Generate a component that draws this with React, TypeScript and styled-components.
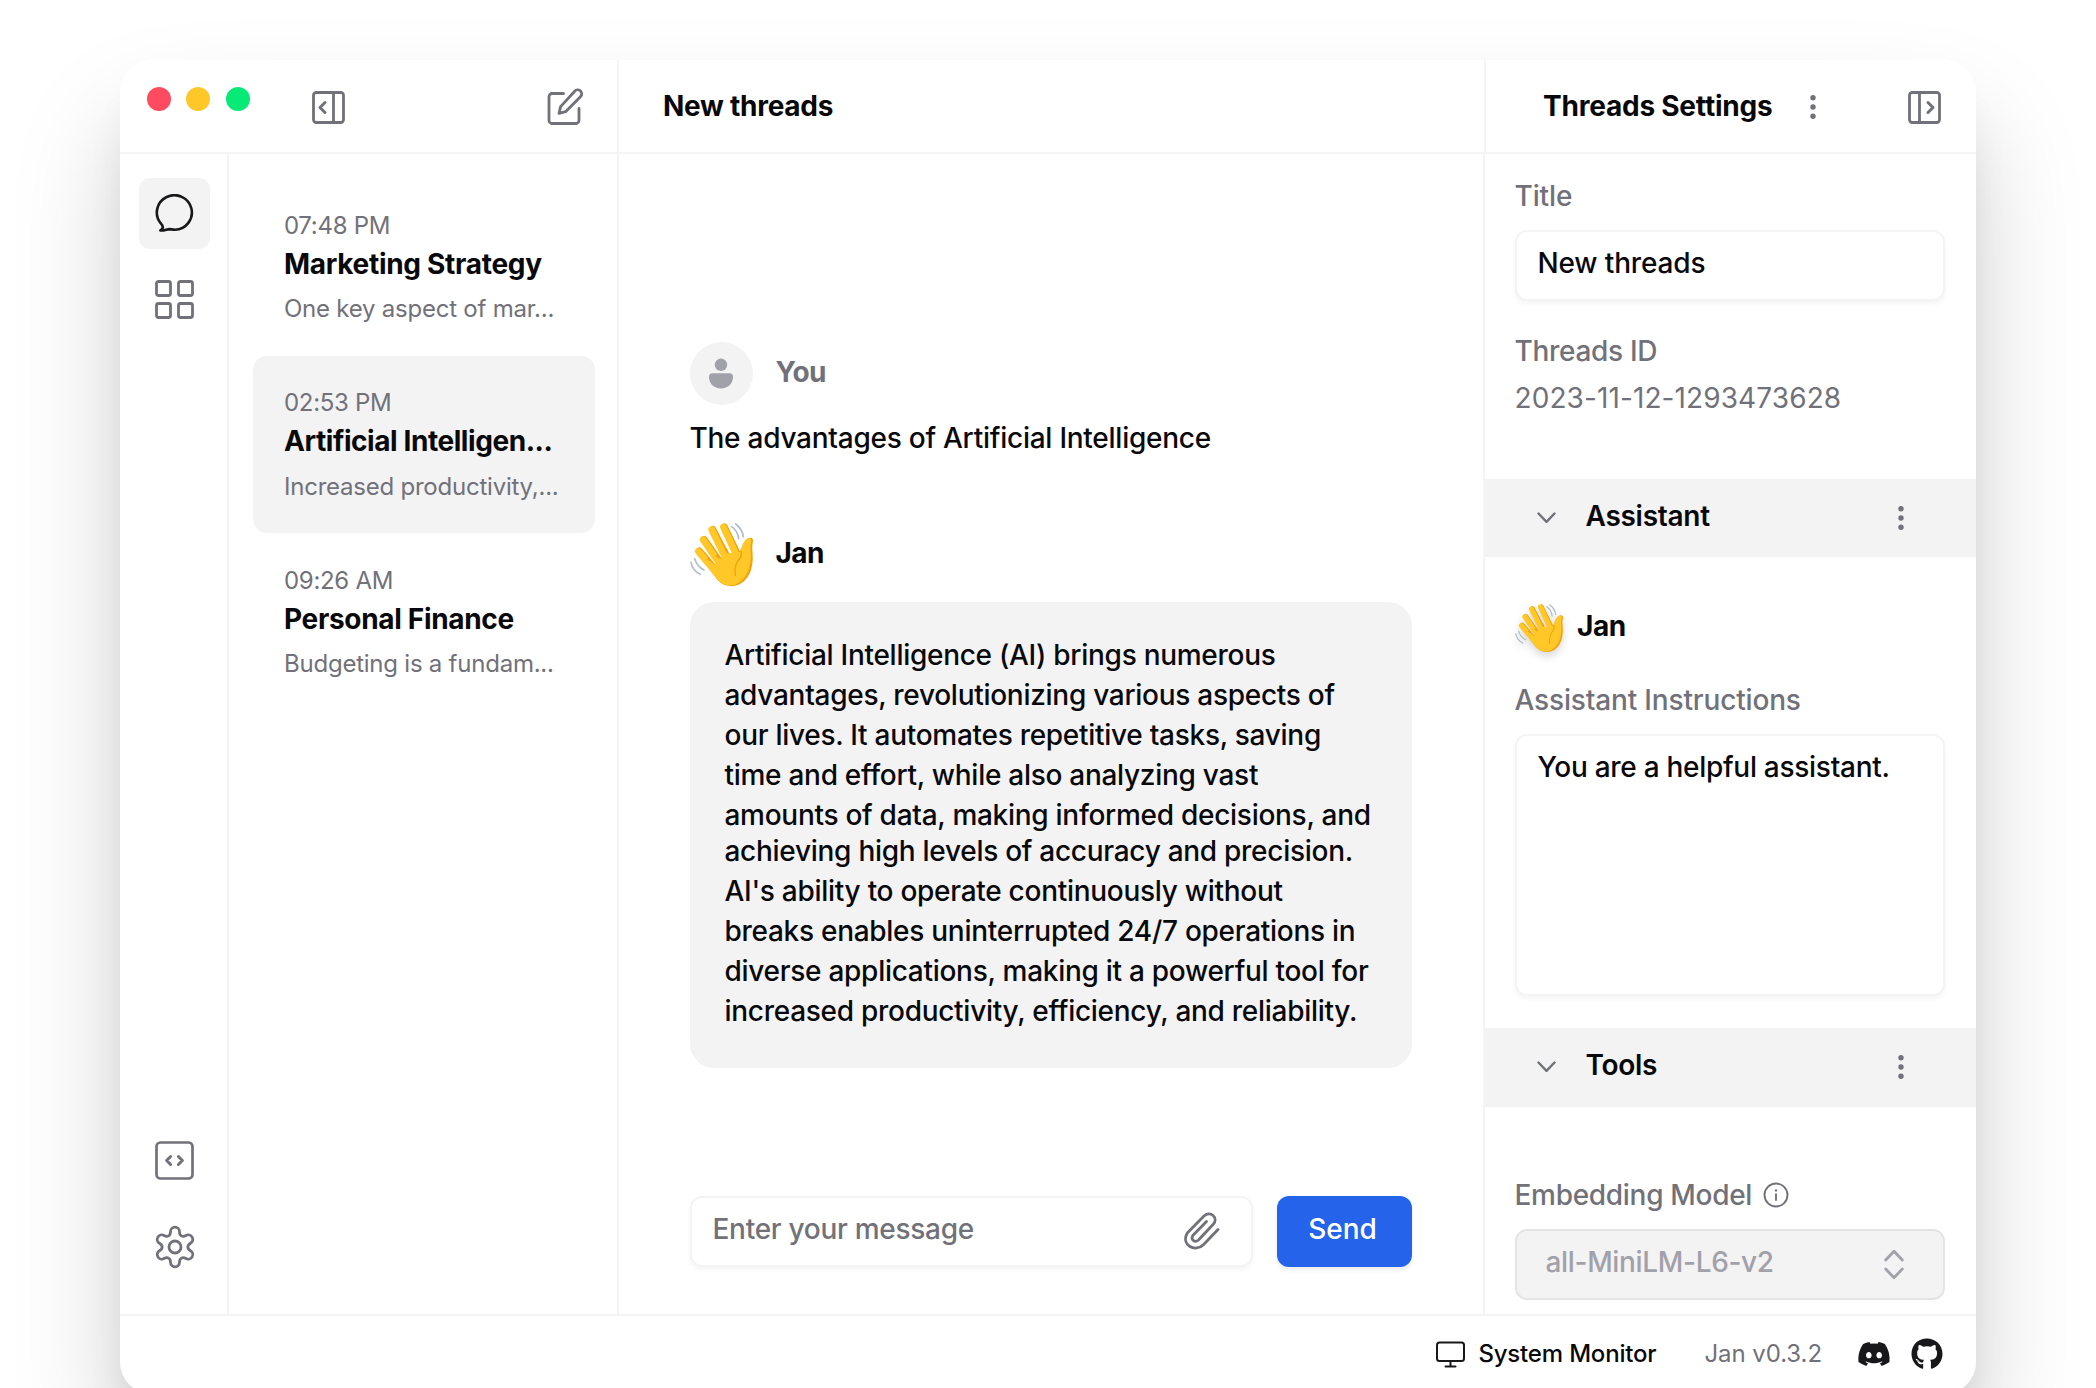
import React from "react";
import styled, { createGlobalStyle } from "styled-components";
import { FaDiscord, FaGithub } from "react-icons/fa";

const color = {
  ink: "#09090b",
  icon: "#18181b",
  muted: "#71717a",
  faint: "#a1a1aa",
  line: "#f4f4f5",
  panel: "#f3f3f3",
  border: "#e4e4e7",
  blue: "#2563eb",
};

const GlobalStyle = createGlobalStyle`
  *, *::before, *::after { box-sizing: border-box; }
  html, body { margin: 0; background: #fff; overflow: hidden; }
  body { font-family: Inter, "Liberation Sans", sans-serif; color: ${color.ink}; }
  svg { display: block; flex: none; }
`;

/* ---------- frame ---------- */

const Page = styled.div`
  height: 1388px;
  padding: 60px 120px 0;
  overflow: hidden;
`;

const Window = styled.div`
  display: flex;
  flex-direction: column;
  height: 1334px;
  background: #fff;
  border-radius: 32px;
  box-shadow: 0 66px 110px rgba(0, 0, 0, 0.18), 0 44px 44px -8px rgba(0, 0, 0, 0.08);
`;

const Header = styled.header`
  display: flex;
  height: 94px;
  border-bottom: 2px solid ${color.line};
`;

const HeaderLeft = styled.div`
  display: flex;
  width: 499px;
  padding: 26px 33px 0 27px;
  border-right: 2px solid ${color.line};
`;

const Lights = styled.div`
  display: flex;
  gap: 15.3px;
  padding-top: 1px;
  margin-right: 62px;
`;

const Light = styled.span<{ $tone: string }>`
  width: 24px;
  height: 24px;
  border-radius: 50%;
  background: ${(p) => p.$tone};
`;

const HeaderIcon = styled.span<{ $push?: boolean; $left?: number; $top: number }>`
  margin-left: ${(p) => (p.$push ? "auto" : `${p.$left ?? 0}px`)};
  padding-top: ${(p) => p.$top}px;
`;

const HeaderMiddle = styled.div`
  width: 865px;
  padding: 26px 44px 0;
`;

const HeaderRight = styled.div`
  display: flex;
  flex: 1;
  padding: 26px 35px 0 57px;
  border-left: 2px solid ${color.line};
`;

const Body = styled.main`
  display: flex;
  height: 1160px;
`;

const Footer = styled.footer`
  display: flex;
  align-items: flex-start;
  justify-content: flex-end;
  flex: 1;
  padding: 19.5px 33px 0 0;
  border-top: 2px solid ${color.line};
`;

/* ---------- text ---------- */

const Text = styled.div<{ $weight?: number; $tone?: string; $track?: number; $small?: boolean }>`
  font-size: ${(p) => (p.$small ? 24 : 28)}px;
  line-height: ${(p) => (p.$small ? 36 : 40)}px;
  font-weight: ${(p) => p.$weight ?? 400};
  letter-spacing: ${(p) => p.$track ?? 0}px;
  color: ${(p) => p.$tone ?? color.ink};
  white-space: nowrap;
`;

/* ---------- navigation ---------- */

const Nav = styled.nav`
  display: flex;
  flex-direction: column;
  gap: 15px;
  width: 109px;
  padding: 24px 17px 32px 19px;
  border-right: 2px solid ${color.line};
`;

const NavItem = styled.div<{ $active?: boolean; $bottom?: boolean }>`
  display: flex;
  align-items: center;
  justify-content: center;
  width: 71px;
  height: 71px;
  margin-top: ${(p) => (p.$bottom ? "auto" : "0")};
  border-radius: 11px;
  background: ${(p) => (p.$active ? color.panel : "transparent")};
`;

/* ---------- threads ---------- */

const Threads = styled.section`
  display: flex;
  flex-direction: column;
  gap: 1px;
  width: 390px;
  padding: 24.5px 22px 0 24px;
  border-right: 2px solid ${color.line};
`;

const ThreadCard = styled.article<{ $active?: boolean }>`
  height: 176.5px;
  padding: 29px 0 0 31px;
  border-radius: 14px;
  background: ${(p) => (p.$active ? color.panel : "transparent")};
`;

const ThreadSummary = styled(Text)`
  padding-top: 7.5px;
`;

/* ---------- conversation ---------- */

const Chat = styled.section`
  display: flex;
  flex-direction: column;
  width: 864px;
  padding: 188px 71px 47px 70.5px;
`;

const Author = styled.div<{ $top?: number }>`
  display: flex;
  align-items: center;
  gap: 23px;
  height: 63px;
  margin-top: ${(p) => p.$top ?? 0}px;
`;

const AuthorName = styled(Text)`
  padding-bottom: 4px;
`;

const Avatar = styled.div`
  display: flex;
  align-items: center;
  justify-content: center;
  width: 63px;
  height: 63px;
  border-radius: 50%;
  background: ${color.panel};
`;

const Message = styled(Text)`
  margin-top: 13px;
`;

const Bubble = styled.div`
  height: 466px;
  margin-top: 16px;
  padding: 33px 0 0 35px;
  border-radius: 24px;
  background: ${color.panel};
`;

const Paragraph = styled(Text)`
  & + & { margin-top: -4px; }
`;

const Composer = styled.div`
  display: flex;
  gap: 24px;
  margin-top: auto;
`;

const Field = styled.div<{ $height?: number }>`
  display: flex;
  align-items: flex-start;
  justify-content: space-between;
  height: ${(p) => p.$height ?? 71}px;
  padding: 11px 31px 0 21px;
  border: 2px solid ${color.line};
  border-radius: 12px;
  background: #fff;
  box-shadow: 0 3px 5px rgba(0, 0, 0, 0.045);
`;

const MessageField = styled(Field)`
  flex: 1;
`;

const ClipSlot = styled.div`
  padding-top: 3px;
`;

const SendButton = styled.button`
  width: 135px;
  height: 71px;
  padding: 0 4px 5px 0;
  border: 0;
  border-radius: 12px;
  background: ${color.blue};
  color: #fff;
  font: 500 28px/40px Inter, "Liberation Sans", sans-serif;
  box-shadow: 0 3px 5px rgba(0, 0, 0, 0.08);
`;

/* ---------- settings ---------- */

const Settings = styled.aside`
  flex: 1;
  border-left: 2px solid ${color.line};
`;

const Group = styled.div<{ $top: number; $height: number }>`
  height: ${(p) => p.$height}px;
  padding: ${(p) => p.$top}px 31.5px 0 29.5px;
`;

const Spaced = styled.div<{ $top: number }>`
  margin-top: ${(p) => p.$top}px;
`;

const SectionBar = styled.div`
  display: flex;
  align-items: center;
  height: 78.5px;
  padding: 0 72px 0 52px;
  background: ${color.panel};
`;

const SectionTitle = styled(Text)`
  flex: 1;
  padding: 0 0 4px 29.5px;
`;

const AssistantRow = styled.div`
  display: flex;
  align-items: center;
  gap: 14.5px;
  height: 48px;
`;

const HandShadow = styled.span`
  filter: drop-shadow(0 4px 4px rgba(0, 0, 0, 0.16));
`;

const LabelRow = styled.div`
  display: flex;
  align-items: center;
  gap: 11px;
`;

const Select = styled.div`
  display: flex;
  align-items: center;
  justify-content: space-between;
  height: 71px;
  padding: 0 38.5px 0 29px;
  border: 2px solid ${color.border};
  border-radius: 12px;
  background: ${color.panel};
`;

const SelectValue = styled(Text)`
  padding-bottom: 4px;
`;

const FooterItem = styled.div<{ $left?: number; $top?: number }>`
  display: flex;
  gap: 13px;
  margin-left: ${(p) => p.$left ?? 0}px;
  padding-top: ${(p) => p.$top ?? 0}px;
`;

/* ---------- icons ---------- */

const line = (stroke: string, width: number) => ({
  fill: "none",
  stroke,
  strokeWidth: width,
  strokeLinecap: "round" as const,
  strokeLinejoin: "round" as const,
});

const PanelIcon = ({ flip }: { flip?: boolean }) => (
  <svg width="33" height="33" viewBox="0 0 33 33" {...line(color.muted, 2.8)} transform={flip ? "scale(-1 1)" : undefined}>
    <rect x="1.5" y="1.5" width="30" height="30" rx="2.8" />
    <path d="M21.5 1.5v30" />
    <path d="M13 11.5L8 16.5L13 21.5" strokeWidth="3" />
  </svg>
);

const EditIcon = () => (
  <svg width="37" height="37" viewBox="0 0 37 37" {...line(color.muted, 2.8)}>
    <path d="M16.5 5.5H5A3 3 0 0 0 2 8.500V32.500A3 3 0 0 0 5 35.500H29A3 3 0 0 0 32 32.500V20.500" />
    <path d="M27.700 3.200A3.700 3.700 0 0 1 33.700 8.400L18.600 23.700L12 25.300L13.600 18.600Z" />
  </svg>
);

const ChatIcon = () => (
  <svg width="39" height="39" viewBox="0 0 39 39" {...line(color.icon, 2.6)}>
    <path d="M5.600 29.200A17.500 17.300 0 1 1 20 35.800C17.500 35.800 16 35.100 14.300 35.100C11.500 35.400 9 37 5.300 36.500C8.600 34.800 8.600 32.400 5.600 29.200Z" />
  </svg>
);

const GridIcon = () => (
  <svg width="39" height="39" viewBox="0 0 39 39" {...line(color.muted, 2.8)}>
    {[1.5, 23.5].map((y) => [1.5, 23.5].map((x) => (
      <rect key={`${x}-${y}`} x={x} y={y} width="14" height="14" rx="2" />
    )))}
  </svg>
);

const CodeIcon = () => (
  <svg width="39" height="39" viewBox="0 0 39 39" {...line(color.muted, 2.7)}>
    <rect x="1.500" y="1.500" width="36" height="36" rx="4" />
    <path d="M15.600 15.500L11.600 19.500L15.600 23.500M23.400 15.500L27.400 19.500L23.400 23.500" strokeWidth="3" />
  </svg>
);

const gearOutline = (() => {
  const turn = (k: number, x: number, y: number) => {
    const a = (k * Math.PI) / 3;
    return `${(x * Math.cos(a) - y * Math.sin(a)).toFixed(2)} ${(x * Math.sin(a) + y * Math.cos(a)).toFixed(2)}`;
  };
  let d = `M${turn(0, -4.5, -15.3)}`;
  for (let k = 0; k < 6; k++) {
    d += `A4.500 4.500 0 0 1 ${turn(k, 4.5, -15.3)}`;
    d += `C${turn(k, 4.5, -11.2)} ${turn(k + 1, -4.5, -11.2)} ${turn(k + 1, -4.5, -15.3)}`;
  }
  return `${d}Z`;
})();

const GearIcon = () => (
  <svg width="44" height="44" viewBox="-22 -22 44 44" {...line(color.muted, 2.8)}>
    <path d={gearOutline} />
    <circle r="6" />
  </svg>
);

const PersonIcon = () => (
  <svg width="26" height="32" viewBox="0 0 26 32" fill={color.faint}>
    <circle cx="13" cy="6.800" r="6.200" />
    <path d="M4.500 15.300H21.500A3.500 3.500 0 0 1 25 18.800C25 25.800 20 30.500 13 30.500S1 25.800 1 18.800A3.500 3.500 0 0 1 4.500 15.300Z" />
  </svg>
);

const PaperclipIcon = () => (
  <svg width="36" height="38" viewBox="0 0 36 38" {...line(color.muted, 2.8)}>
    <path d="M34 17.500L19.700 32.500C11.500 41 -3.500 33 3.300 21L20 4C26.500 -1.800 34.500 6 29.500 12L14.500 28C10.500 31.500 6 27 9.300 23L22.500 9.500" />
  </svg>
);

const DotsIcon = () => (
  <svg width="6" height="24" viewBox="0 0 6 24" fill={color.muted}>
    <circle cx="3" cy="2.800" r="2.700" />
    <circle cx="3" cy="12" r="2.700" />
    <circle cx="3" cy="21.200" r="2.700" />
  </svg>
);

const ChevronIcon = () => (
  <svg width="19" height="12" viewBox="0 0 19 12" {...line(color.muted, 2.4)}>
    <path d="M1.500 1.500L9.500 9.800L17.500 1.500" />
  </svg>
);

const InfoIcon = () => (
  <svg width="26" height="26" viewBox="0 0 26 26" {...line(color.muted, 1.9)}>
    <circle cx="13" cy="13" r="11.500" />
    <path d="M13 12.300V18" />
    <circle cx="13" cy="8.400" r="1.200" fill={color.muted} stroke="none" />
  </svg>
);

const SelectIcon = () => (
  <svg width="20" height="31" viewBox="0 0 20 31" {...line(color.faint, 2.8)}>
    <path d="M1.700 11L10 2.300L18.300 11M1.700 20L10 28.700L18.300 20" />
  </svg>
);

const MonitorIcon = () => (
  <svg width="29" height="27" viewBox="0 0 29 27" {...line(color.icon, 2)}>
    <rect x="1" y="1.500" width="27" height="18.500" rx="2.500" />
    <path d="M14.500 20V25.500M9.500 25.500H19.500" />
  </svg>
);

const WaveIcon = ({ size }: { size: number }) => (
  <svg width={size} height={size} viewBox="0 0 189 189" fill="none" strokeLinecap="round" strokeLinejoin="round">
    <g stroke="#b0bec5" strokeWidth="5">
      <path d="M125 11Q143 23 146 47M137 3Q157 18 160 41" />
      <path d="M3 118Q8 143 31 154M14 107Q21 130 42 141" />
    </g>
    <g fill="#f0a30a" stroke="none">
      <path d="M24 77L74 142L150 88C158 62 166 45 182 44C189 45 190 51 188 60C185 72 189 91 188 111C186 158 160 189 124 189C98 189 84 175 66 149Z" />
    </g>
    <g stroke="#f0a30a" strokeWidth="21">
      <path d="M28 84L80 145M42 49L92 120M68 19L112 104M103 12L145 98" />
    </g>
    <g stroke="#ffc828" strokeWidth="20">
      <path d="M25 85L78 148M39 50L90 124M65 20L110 112M100 12L142 102" />
    </g>
    <path fill="#ffc828" d="M18 92L72 126L105 92L149 88C158 66 164 46 177 45C184 46 184 52 183 60C179 72 184 90 182 110C178 154 155 184 124 187C98 188 84 173 67 149Z" />
    <path stroke="#f0a30a" strokeWidth="4" d="M153 84C163 109 128 109 136 157" />
    <path fill="#f0a30a" d="M104 82L117 90L110 74ZM76 99L90 109L83 93ZM50 109L64 116L57 101Z" />
  </svg>
);

/* ---------- content ---------- */

const threads = [
  { time: "07:48 PM", title: "Marketing Strategy", text: "One key aspect of mar...", track: -0.3 },
  { time: "02:53 PM", title: "Artificial Intelligen...", text: "Increased productivity,...", active: true, track: -0.43 },
  { time: "09:26 AM", title: "Personal Finance", text: "Budgeting is a fundam...", track: -0.33 },
];

const answer = [
  [
    "Artificial Intelligence (AI) brings numerous",
    "advantages, revolutionizing various aspects of",
    "our lives. It automates repetitive tasks, saving",
    "time and effort, while also analyzing vast",
    "amounts of data, making informed decisions, and",
  ],
  [
    "achieving high levels of accuracy and precision.",
    "AI's ability to operate continuously without",
    "breaks enables uninterrupted 24/7 operations in",
    "diverse applications, making it a powerful tool for",
    "increased productivity, efficiency, and reliability.",
  ],
];

const Section = ({ title }: { title: string }) => (
  <SectionBar>
    <ChevronIcon />
    <SectionTitle $weight={600} $track={-0.28}>{title}</SectionTitle>
    <DotsIcon />
  </SectionBar>
);

export default function App() {
  return (
    <>
      <GlobalStyle />
      <Page>
        <Window>
          <Header>
            <HeaderLeft>
              <Lights>
                <Light $tone="#ff4b5f" />
                <Light $tone="#ffc728" />
                <Light $tone="#07ea76" />
              </Lights>
              <HeaderIcon $top={4.5}><PanelIcon /></HeaderIcon>
              <HeaderIcon $push $top={2}><EditIcon /></HeaderIcon>
            </HeaderLeft>
            <HeaderMiddle>
              <Text $weight={700} $track={-0.27}>New threads</Text>
            </HeaderMiddle>
            <HeaderRight>
              <Text $weight={700} $track={-0.22}>Threads Settings</Text>
              <HeaderIcon $left={38} $top={9}><DotsIcon /></HeaderIcon>
              <HeaderIcon $push $top={4.5}><PanelIcon flip /></HeaderIcon>
            </HeaderRight>
          </Header>

          <Body>
            <Nav>
              <NavItem $active><ChatIcon /></NavItem>
              <NavItem><GridIcon /></NavItem>
              <NavItem $bottom><CodeIcon /></NavItem>
              <NavItem><GearIcon /></NavItem>
            </Nav>

            <Threads>
              {threads.map((t) => (
                <ThreadCard key={t.time} $active={t.active}>
                  <Text $small $tone={color.muted} $track={-0.3}>{t.time}</Text>
                  <Text $weight={700} $track={t.track}>{t.title}</Text>
                  <ThreadSummary $small $tone={color.muted} $track={-0.23}>{t.text}</ThreadSummary>
                </ThreadCard>
              ))}
            </Threads>

            <Chat>
              <Author>
                <Avatar><PersonIcon /></Avatar>
                <AuthorName $weight={700} $tone={color.muted} $track={-0.5}>You</AuthorName>
              </Author>
              <Message $weight={500} $track={-0.25}>The advantages of Artificial Intelligence</Message>
              <Author $top={65}>
                <WaveIcon size={63} />
                <AuthorName $weight={700} $track={-0.5}>Jan</AuthorName>
              </Author>
              <Bubble>
                {answer.map((lines) => (
                  <Paragraph key={lines[0]} $weight={500} $track={-0.28}>
                    {lines.map((l) => <React.Fragment key={l}>{l}<br /></React.Fragment>)}
                  </Paragraph>
                ))}
              </Bubble>
              <Composer>
                <MessageField>
                  <Text $weight={500} $tone={color.muted} $track={-0.28}>Enter your message</Text>
                  <ClipSlot><PaperclipIcon /></ClipSlot>
                </MessageField>
                <SendButton>Send</SendButton>
              </Composer>
            </Chat>

            <Settings>
              <Group $top={21.5} $height={324.5}>
                <Text $weight={500} $tone={color.muted} $track={-0.11}>Title</Text>
                <Spaced $top={14.5}>
                  <Field><Text $weight={500} $track={-0.15}>New threads</Text></Field>
                </Spaced>
                <Spaced $top={29.5}>
                  <Text $weight={500} $tone={color.muted} $track={-0.3}>Threads ID</Text>
                </Spaced>
                <Spaced $top={7.5}>
                  <Text $tone={color.muted} $track={0.1}>2023-11-12-1293473628</Text>
                </Spaced>
              </Group>
              <Section title="Assistant" />
              <Group $top={46.5} $height={471}>
                <AssistantRow>
                  <HandShadow><WaveIcon size={48} /></HandShadow>
                  <AuthorName $weight={700} $track={-0.4}>Jan</AuthorName>
                </AssistantRow>
                <Spaced $top={28}>
                  <Text $weight={500} $tone={color.muted} $track={-0.16}>Assistant Instructions</Text>
                </Spaced>
                <Spaced $top={14.5}>
                  <Field $height={262}><Text $weight={500} $track={-0.28}>You are a helpful assistant.</Text></Field>
                </Spaced>
              </Group>
              <Section title="Tools" />
              <Group $top={68.5} $height={207}>
                <LabelRow>
                  <Text $weight={500} $tone={color.muted} $track={-0.3}>Embedding Model</Text>
                  <InfoIcon />
                </LabelRow>
                <Spaced $top={13.5}>
                  <Select>
                    <SelectValue $weight={500} $tone={color.faint} $track={-0.33}>all-MiniLM-L6-v2</SelectValue>
                    <SelectIcon />
                  </Select>
                </Spaced>
              </Group>
            </Settings>
          </Body>

          <Footer>
            <FooterItem>
              <Spaced $top={5}><MonitorIcon /></Spaced>
              <Text $small $weight={500} $track={-0.18}>System Monitor</Text>
            </FooterItem>
            <FooterItem $left={48}>
              <Text $small $tone={color.muted} $track={-0.07}>Jan v0.3.2</Text>
            </FooterItem>
            <FooterItem $left={35} $top={1}><FaDiscord size={34} color={color.icon} /></FooterItem>
            <FooterItem $left={20} $top={2}><FaGithub size={32} color={color.icon} /></FooterItem>
          </Footer>
        </Window>
      </Page>
    </>
  );
}
